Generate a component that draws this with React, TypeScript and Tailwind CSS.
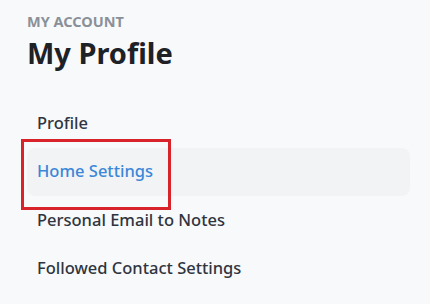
import { clsx } from "clsx";

const items = [
    { label: "Profile", active: false },
    { label: "Home Settings", active: true },
    { label: "Personal Email to Notes", active: false },
    { label: "Followed Contact Settings", active: false },
];

export default function App() {
    return (
        <div className="min-h-[304px] w-[430px] bg-[#f8f9fb] font-['Noto_Sans',sans-serif]">
            <div className="pt-[11px] pl-[27px] pr-[20px]">
                <p className="text-[14.5px] leading-[20px] font-bold text-[#8a9099]">
                    MY ACCOUNT
                </p>
                <h1 className="mt-[3px] text-[29px] leading-[38px] font-bold text-[#1e2126]">
                    My Profile
                </h1>

                <ul className="mt-[27px] flex flex-col">
                    {items.map((item) => (
                        <li
                            key={item.label}
                            className={clsx(
                                "relative flex h-[48.5px] items-center rounded-lg px-[10px] text-[16.5px] font-medium",
                                item.active
                                    ? "bg-[#f2f3f5] text-[#3a87d8]"
                                    : "text-[#2f3540]"
                            )}
                        >
                            {item.label}
                            {item.active && (
                                <span className="pointer-events-none absolute -left-[6px] -top-[9px] h-[71px] w-[150px] border-[3px] border-[#d9232a]" />
                            )}
                        </li>
                    ))}
                </ul>
            </div>
        </div>
    );
}
